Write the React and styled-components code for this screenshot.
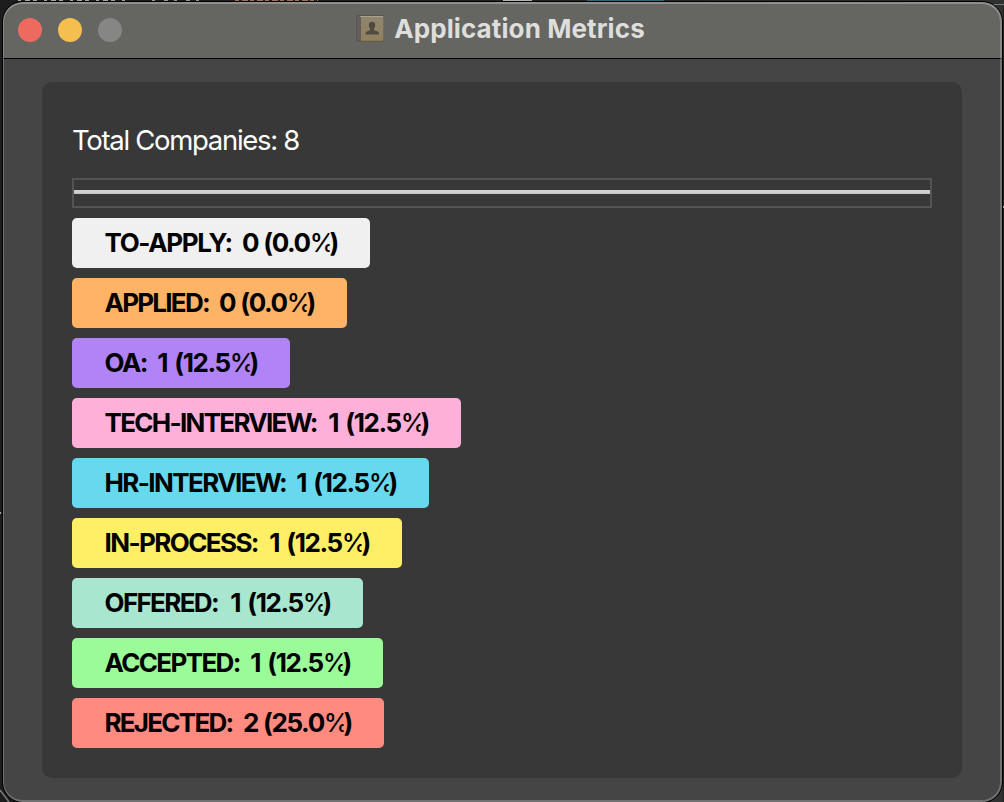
import React from "react";
import styled, { createGlobalStyle } from "styled-components";

const GlobalStyle = createGlobalStyle`
  * { box-sizing: border-box; }
  body { margin: 0; background: #161616; overflow: hidden; font-family: Inter, "Liberation Sans", sans-serif; }
`;

const Desktop = styled.div`
  position: relative;
  width: 1004px;
  height: 802px;
  padding: 2px 2px 0 3px;
  background: linear-gradient(90deg, #1d1d1d, #222 50%, #303132);
`;

const Backdrop = styled.svg`
  position: absolute;
  inset: 0;
`;

const Window = styled.main`
  position: relative;
  display: flex;
  flex-direction: column;
  height: 800px;
  overflow: hidden;
  border-radius: 20px;
  background: #454545;
  box-shadow: 0 0 0 1px #000;

  &::after {
    content: "";
    position: absolute;
    inset: 0;
    border: 1px solid rgba(255, 255, 255, 0.24);
    border-top: 2px solid rgba(255, 255, 255, 0.28);
    border-bottom-width: 2px;
    border-right-width: 2px;
    border-radius: 20px;
    pointer-events: none;
  }
`;

const TitleBar = styled.header`
  display: grid;
  grid-template-columns: 1fr auto 1fr;
  flex: none;
  height: 57px;
  padding: 0 19px 0 15px;
  background: #656562;
  border-bottom: 1px solid #000;
`;

const Lights = styled.div`
  display: flex;
  gap: 16px;
  padding-top: 16px;
`;

const Light = styled.span`
  width: 24px;
  height: 24px;
  border-radius: 50%;
  background: ${(p) => p.$color};
`;

const Title = styled.h1`
  display: flex;
  margin: 0;
  padding-top: 10px;
  gap: 10px;
  color: #dededc;
  font-size: 26px;
  line-height: 34px;
  font-weight: 700;
  letter-spacing: 0.1px;
  white-space: nowrap;
`;

const BookIcon = styled.svg`
  flex: none;
  margin-top: 3px;
`;

const Body = styled.div`
  flex: 1;
  padding: 23px 40px 24px 39px;
`;

const Panel = styled.section`
  height: 696px;
  padding: 41px 30px 0;
  border-radius: 10px;
  background: #383838;
`;

const Total = styled.p`
  margin: 0;
  color: #fff;
  font-size: 27.5px;
  line-height: 34px;
  letter-spacing: -1.3px;
  white-space: nowrap;
`;

const Divider = styled.div`
  height: 30px;
  margin: 21px 0 10px;
  padding-top: 10px;
  border: 2px solid #545454;
`;

const Rule = styled.div`
  height: 4px;
  background: #d0d0d0;
  border-bottom: 1px solid #c4c4c4;
`;

const List = styled.div`
  display: flex;
  flex-direction: column;
  gap: 10px;
`;

const Badge = styled.div`
  display: flex;
  justify-content: space-between;
  width: ${(p) => p.$width}px;
  height: 50px;
  padding: 0 32px 0 32.5px;
  border-radius: 5px;
  background: ${(p) => p.$color};
  color: #000;
  font-size: 26px;
  line-height: 50px;
  font-weight: 650;
  white-space: nowrap;
`;

const Status = styled.span`
  letter-spacing: ${(p) => p.$tracking}px;
`;

const Value = styled.span`
  display: flex;
  white-space: pre;
  letter-spacing: -1.4px;
  word-spacing: ${(p) => p.$wordGap}px;
`;

const Percent = styled.span`
  font-weight: 450;
  letter-spacing: -6px;
  clip-path: inset(0);
`;

const rows = [
  ["TO-APPLY:", "0", "0.0", "#f0f0f0", 298, -1.35],
  ["APPLIED:", "0", "0.0", "#ffb366", 275, -1.75],
  ["OA:", "1", "12.5", "#b084f7", 218, -1.5],
  ["TECH-INTERVIEW:", "1", "12.5", "#ffb0d8", 389, -1.7],
  ["HR-INTERVIEW:", "1", "12.5", "#67d9ef", 357, -1.6],
  ["IN-PROCESS:", "1", "12.5", "#ffef66", 330, -1.6],
  ["OFFERED:", "1", "12.5", "#a8e6cf", 291, -1.65],
  ["ACCEPTED:", "1", "12.5", "#9afb98", 311, -1.65],
  ["REJECTED:", "2", "25.0", "#ff8a80", 312, -1.75],
];

function ContactsIcon() {
  return (
    <BookIcon width="28" height="28" viewBox="0 0 28 28">
      <defs>
        <linearGradient id="cover" x1="0" y1="0" x2="0" y2="1">
          <stop offset="0" stopColor="#8f8670" />
          <stop offset="1" stopColor="#91805f" />
        </linearGradient>
      </defs>
      <rect x="0" y="0" width="28" height="26.5" rx="1.5" fill="#595652" />
      <rect x="1" y="1" width="4" height="24" fill="#625e5b" />
      <rect x="5" y="1" width="22.5" height="24.5" rx="1" fill="url(#cover)" />
      <path d="M4 1.5H27" stroke="#aaa18c" />
      <path d="M5 25H27" stroke="#a1824f" />
      <path d="M9.500 19.500v-1.500c.5-2 3-2 4.500-2.800v-1.700c-1-1-1.200-2.200-1.200-3.500 0-2.200 1.200-3.200 3.200-3.200s3.200 1 3.200 3.200c0 1.300-.2 2.500-1.200 3.500v1.700c1.500.8 4.500.8 5 2.800v1.500z" fill="#504b40" />
    </BookIcon>
  );
}

export default function App() {
  return (
    <>
      <GlobalStyle />
      <Desktop>
        <Backdrop width="1004" height="802" aria-hidden="true">
          <path d="M18 0.500H125" stroke="#a6a6a6" strokeDasharray="3 4 5 3 4 7" />
          <path d="M152 0.500H204" stroke="#999" strokeDasharray="3 9 4 6" />
          <path d="M235 0.500H318" stroke="#a66f52" strokeDasharray="4 3 6 2" />
          <path d="M503 0.500H532" stroke="#b5b5ae" />
          <path d="M587 0.500H664" stroke="#2f6674" />
          <path d="M990 4.500H1004" stroke="#777" />
          <path d="M1003.500 6V802" stroke="#20201c" />
          <path d="M1003 207H1004" stroke="#aaa" strokeWidth="2" />
          <path d="M0 513H1" stroke="#aaa" strokeWidth="2" />
          <path d="M0 790L9 802" stroke="#777" strokeWidth="1.500" />
        </Backdrop>
        <Window>
          <TitleBar>
            <Lights>
              <Light $color="#ed6a5e" />
              <Light $color="#f5bf4f" />
              <Light $color="#868684" />
            </Lights>
            <Title>
              <ContactsIcon />
              Application Metrics
            </Title>
          </TitleBar>
          <Body>
            <Panel>
              <Total>Total Companies: 8</Total>
              <Divider>
                <Rule />
              </Divider>
              <List>
                {rows.map(([name, count, share, color, width, tracking]) => (
                  <Badge key={name} $color={color} $width={width}>
                    <Status $tracking={tracking}>{name}</Status>
                    <Value $wordGap={count === "1" ? 2.5 : 0.5}>
                      <span>{`${count} (${share}`}</span>
                      <Percent>%</Percent>
                      <span>)</span>
                    </Value>
                  </Badge>
                ))}
              </List>
            </Panel>
          </Body>
        </Window>
      </Desktop>
    </>
  );
}
